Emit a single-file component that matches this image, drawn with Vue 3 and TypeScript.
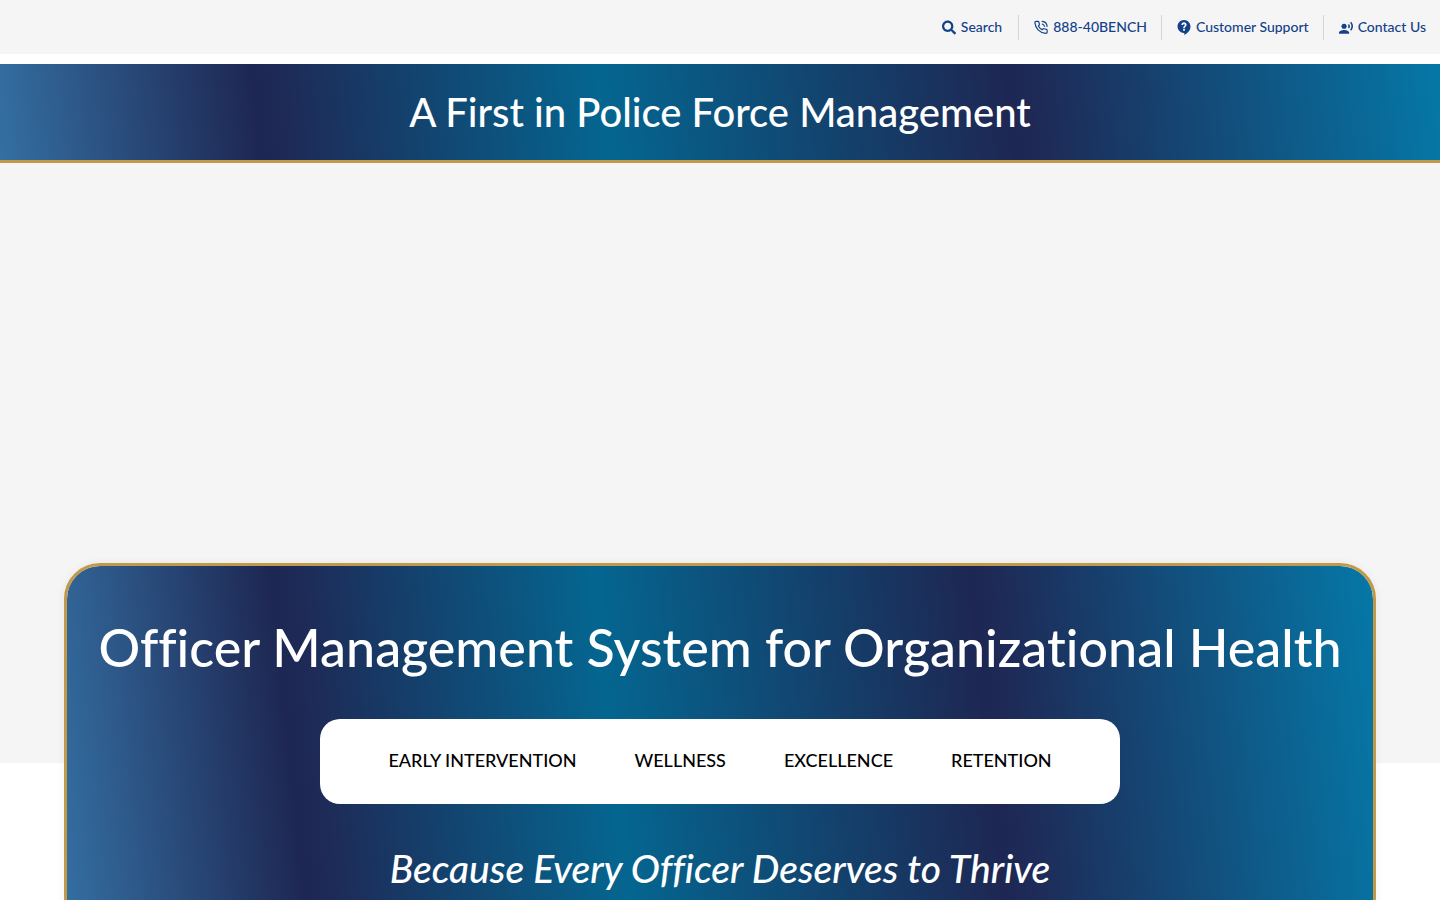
<script setup lang="ts">
interface NavItem {
  label: string
  href: string
  viewBox: string
  paths: string[]
  stroked?: boolean
}

const navItems: NavItem[] = [
  {
    label: '888-40BENCH',
    href: 'tel:8884023624',
    viewBox: '0 0 24 24',
    stroked: true,
    paths: [
      'M14 1.500a9.500 9.500 0 0 1 8.500 8.500M14 6a5.500 5.500 0 0 1 4 4',
      'M22.500 17v3a2 2 0 0 1-2.200 2A19.800 19.800 0 0 1 1.500 3.700 2 2 0 0 1 3.500 1.500h3a2 2 0 0 1 2 1.700c.1 1 .4 1.900.7 2.800a2 2 0 0 1-.5 2.100L7.500 9.400a16 16 0 0 0 6.500 6.500l1.300-1.300a2 2 0 0 1 2.100-.4c.9.3 1.800.6 2.800.7a2 2 0 0 1 2.300 2.100z',
    ],
  },
  {
    label: 'Customer Support',
    href: '#support',
    viewBox: '2 2 19 22',
    paths: [
      'M11.500 2C6.260 2 2 6.260 2 11.500S6.260 21 11.500 21h.5v3c4.860-2.340 9-7 9-12.500C21 6.260 16.740 2 11.500 2zm1.300 15.800h-2.600v-2.500h2.600v2.500zm0-3.800h-2.600c0-3.300 2.300-3 2.300-4.800 0-.7-.4-1.200-1.100-1.200s-1.200.5-1.200 1.400H7.600c0-2.600 1.700-4.100 3.900-4.100s3.800 1.500 3.800 3.800c0 2.500-2.500 2.700-2.500 4.900z',
    ],
  },
  {
    label: 'Contact Us',
    href: '#contact',
    viewBox: '1 0 22 22',
    paths: [
      'M9 5a4 4 0 1 1 0 8 4 4 0 0 1 0-8z',
      'M9 15c-2.670 0-8 1.340-8 4v2h16v-2c0-2.660-5.330-4-8-4zm7.760-9.640-1.680 1.690c.84 1.180.84 2.710 0 3.890l1.680 1.690c2.020-2.020 2.020-5.070 0-7.270zM20.070 2l-1.630 1.630c2.770 3.020 2.770 7.560 0 10.740L20.070 16c3.900-3.890 3.910-9.950 0-14z',
    ],
  },
]

const pillars: string[] = ['Early Intervention', 'Wellness', 'Excellence', 'Retention']
</script>

<template>
  <div class="page">
    <header class="topbar">
      <nav class="topnav" aria-label="Utility">
        <button type="button" class="navitem">
          <svg class="icon" viewBox="0 0 512 512" aria-hidden="true">
            <path
              d="M505 442.700 405.300 343c-4.500-4.500-10.600-7-17-7H372c27.600-35.300 44-79.700 44-128C416 93.100 322.900 0 208 0S0 93.100 0 208s93.100 208 208 208c48.300 0 92.700-16.400 128-44v16.300c0 6.400 2.500 12.500 7 17l99.700 99.700c9.400 9.400 24.600 9.400 33.900 0l28.300-28.300c9.400-9.400 9.400-24.600.1-34zM208 336c-70.700 0-128-57.200-128-128 0-70.700 57.200-128 128-128 70.700 0 128 57.200 128 128 0 70.700-57.200 128-128 128z"
            />
          </svg>
          <span>Search</span>
        </button>
        <a v-for="item in navItems" :key="item.label" class="navitem" :href="item.href">
          <svg
            class="icon"
            :class="{ stroked: item.stroked }"
            :viewBox="item.viewBox"
            aria-hidden="true"
          >
            <path v-for="d in item.paths" :key="d" :d="d" />
          </svg>
          <span>{{ item.label }}</span>
        </a>
      </nav>
    </header>

    <section class="banner">
      <h2>A First in Police Force Management</h2>
    </section>

    <section class="hero"></section>

    <main class="card">
      <h1>Officer Management System for Organizational Health</h1>
      <ul class="pillars">
        <li v-for="pillar in pillars" :key="pillar">{{ pillar }}</li>
      </ul>
      <p class="tagline">Because Every Officer Deserves to Thrive</p>
    </main>
  </div>
</template>

<style>
body {
  margin: 0;
  background: #fff;
}
</style>

<style scoped>
.page {
  --gold: #c1994a;
  --sweep: linear-gradient(
    84deg,
    #346fa2 0%,
    #1e2753 18%,
    #1e2a57 20%,
    #046690 42%,
    #1e2753 70%,
    #1e2a57 72%,
    #0578a7 100%
  );
  font-family: Lato, 'Open Sans', sans-serif;
  font-weight: 500;
  font-variant-ligatures: none;
  color: #fff;
}

.topbar {
  display: flex;
  justify-content: flex-end;
  align-items: center;
  height: 54px;
  margin-bottom: 10px;
  background: #f5f5f5;
}

.topnav {
  display: flex;
  align-items: center;
}

.navitem {
  display: flex;
  align-items: center;
  gap: 5px;
  height: 25px;
  padding: 0 14px 0 15px;
  border: 0;
  background: none;
  font: inherit;
  font-size: 14px;
  line-height: 24px;
  color: #134189;
  text-decoration: none;
  white-space: nowrap;
  cursor: pointer;
}

.navitem:first-child {
  padding-right: 16px;
}

.navitem + .navitem {
  border-left: 1px solid #d5d5d5;
}

.icon {
  width: 14px;
  height: 15px;
  fill: currentColor;
}

.stroked {
  fill: none;
  stroke: currentColor;
  stroke-width: 2;
  stroke-linecap: round;
  stroke-linejoin: round;
}

.banner {
  padding: 24px 20px;
  border-bottom: 3px solid var(--gold);
  background: var(--sweep);
  text-align: center;
}

.banner h2 {
  margin: 0;
  font-size: 40px;
  font-weight: 500;
  line-height: 48px;
}

.hero {
  height: 600px;
  background: #f5f5f5;
}

.card {
  display: flex;
  flex-direction: column;
  align-items: center;
  margin: -200px 64px 0;
  padding: 49px 20px;
  border: 3px solid var(--gold);
  border-radius: 36px;
  background: var(--sweep) padding-box;
  box-shadow: 0 0 10px rgba(0, 0, 0, 0.06);
  text-align: center;
}

.card h1 {
  margin: 0;
  font-size: 52px;
  font-weight: 500;
  line-height: 64px;
}

.pillars {
  display: flex;
  justify-content: center;
  gap: 58px;
  margin: 40px 0 0;
  padding: 29px 68px 31px;
  border-radius: 20px;
  background: #fff;
  list-style: none;
  color: #000;
  font-size: 18px;
  line-height: 25px;
  text-transform: uppercase;
}

.tagline {
  margin: 40px 0 0;
  font-size: 39px;
  font-style: italic;
  line-height: 48px;
}
</style>
